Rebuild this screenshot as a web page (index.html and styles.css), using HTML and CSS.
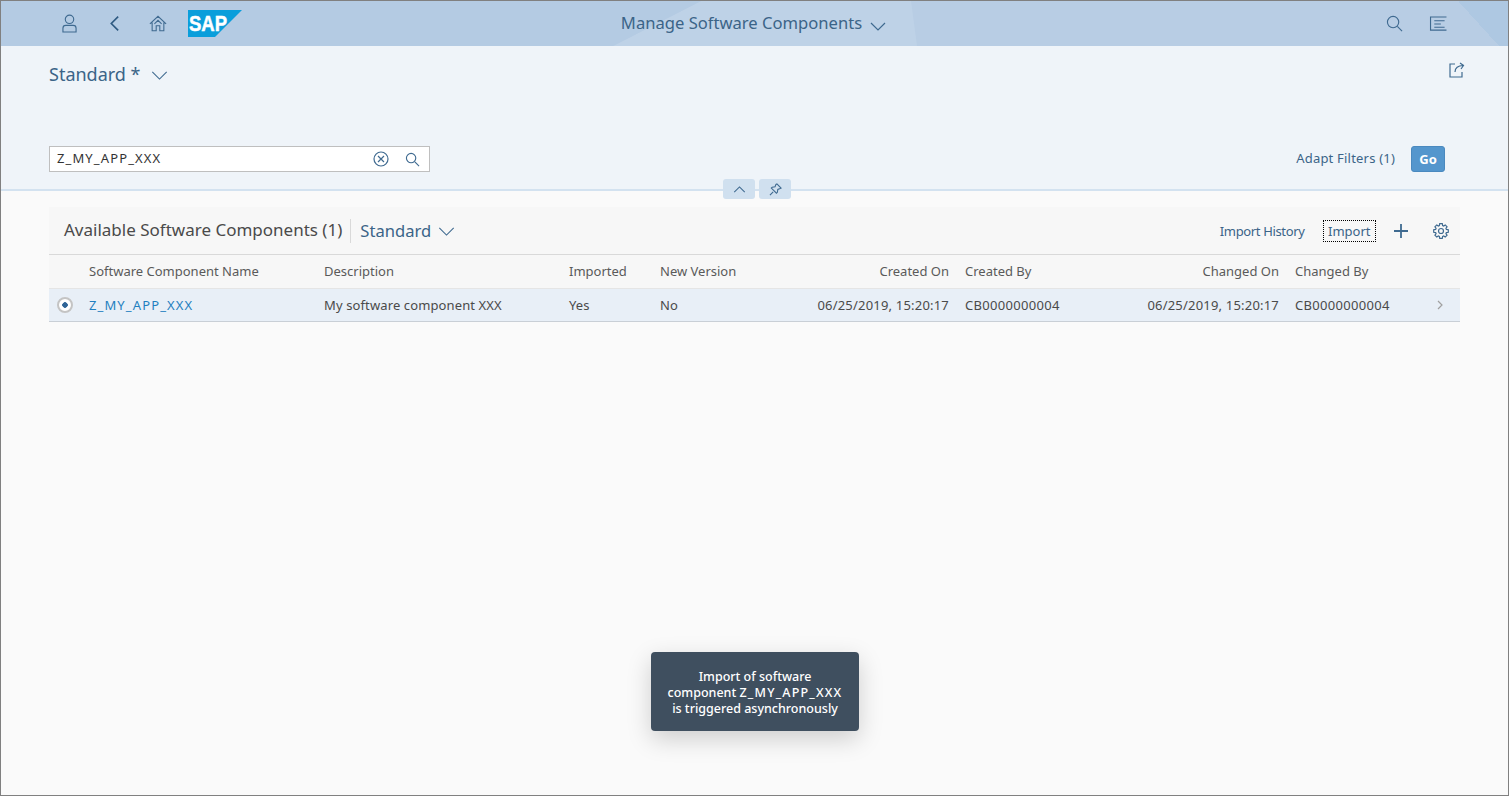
FILE: index.html
```html
<!doctype html>
<html>

<head>
  <title>Manage Software Components</title>
  <link rel="stylesheet" href="styles.css">
</head>

<body>
  <div class="page">
    <header class="shell">
      <div class="shell-left">
        <svg class="icon user" viewBox="0 0 16 20"><circle cx="8" cy="5.5" r="4.5" /><path d="M1 19v-4a3 3 0 0 1 3-3h8a3 3 0 0 1 3 3v4z" /></svg>
        <svg class="icon back" viewBox="0 0 12 18"><path d="M10 1.500 2.500 9l7.500 7.500" /></svg>
        <svg class="icon home" viewBox="0 0 20 18"><path d="M1 9.500 10 1l9 8.500M3.500 8v9h4.500v-5.500h4V17h4.500V8M6 9.500 10 5.500l4 4" /></svg>
        <svg class="sap-logo" viewBox="0 0 54 27">
          <polygon points="0,0 54,0 27,27 0,27" fill="#0a9edb" />
          <text x="1" y="21" class="sap-text" textLength="38" lengthAdjust="spacingAndGlyphs">SAP</text>
        </svg>
      </div>
      <div class="shell-title">
        <span>Manage Software Components</span>
        <svg class="icon chev-small" viewBox="0 0 16 9"><path d="M1 1l7 7 7-7" /></svg>
      </div>
      <div class="shell-right">
        <svg class="icon search" viewBox="0 0 18 18"><circle cx="7.500" cy="7.500" r="6" /><path d="M12 12l5 5" /></svg>
        <svg class="icon notes" viewBox="0 0 19 16"><path d="M18 1H1v14h17M5 5h11M5 8.500h7M5 12h11" /></svg>
      </div>
    </header>

    <section class="filterbar">
      <div class="variant-row">
        <div class="variant">
          <span>Standard *</span>
          <svg class="icon chev" viewBox="0 0 18 10"><path d="M1 1l8 8 8-8" /></svg>
        </div>
        <svg class="icon share" viewBox="0 0 16 16"><path d="M6 2H1v13h12v-5M6 10c0-4 3-6.500 8-6.500M11 1l3.500 2.500L12 7" /></svg>
      </div>
      <div class="filter-row">
        <div class="search-field">
          <span class="search-value caps">Z_MY_APP_XXX</span>
          <svg class="icon clear" viewBox="0 0 16 16"><circle cx="8" cy="8" r="7" /><path d="M5 5l6 6M11 5l-6 6" /></svg>
          <svg class="icon find" viewBox="0 0 16 16"><circle cx="6.500" cy="6.500" r="5" /><path d="M10.500 10.500 15 15" /></svg>
        </div>
        <div class="filter-actions">
          <a class="link adapt">Adapt Filters (1)</a>
          <button class="go" type="button">Go</button>
        </div>
      </div>
      <div class="collapse-btns">
        <button type="button"><svg class="icon up" viewBox="0 0 14 8"><path d="M1 7l6-6 6 6" /></svg></button>
        <button type="button"><svg class="icon pin" viewBox="0 0 14 14"><path d="M1 13l3.500-3.500M8.500 1l4.500 4.500-1 .5-2.500 1-.5 3-1 1L2.500 5.500l1-1 3-.5 1-2.500z" /></svg></button>
      </div>
    </section>

    <main class="content">
      <div class="table-wrap">
        <div class="toolbar">
          <span class="table-title">Available Software Components (1)</span>
          <span class="toolbar-sep"></span>
          <span class="table-variant">Standard</span>
          <svg class="icon chev" viewBox="0 0 18 10"><path d="M1 1l8 8 8-8" /></svg>
          <div class="toolbar-actions">
            <a class="link history">Import History</a>
            <a class="link focused">Import</a>
            <svg class="icon plus" viewBox="0 0 14 14"><path d="M7 0v14M0 7h14" /></svg>
            <svg class="icon gear" viewBox="0 0 16 16"><circle cx="8" cy="8" r="2.500" /><path d="M13.360 6.360 15.290 6.720V9.280L13.360 9.640 12.940 10.630 14.060 12.240 12.240 14.060 10.630 12.940 9.640 13.360 9.280 15.290H6.720L6.360 13.360 5.370 12.940 3.760 14.060 1.940 12.240 3.060 10.630 2.640 9.640 .71 9.280V6.720L2.640 6.360 3.060 5.370 1.940 3.760 3.760 1.940 5.370 3.060 6.360 2.640 6.720 .71H9.280L9.640 2.640 10.630 3.060 12.240 1.940 14.060 3.760 12.940 5.370z" /></svg>
          </div>
        </div>
        <div class="row head">
          <div></div>
          <div>Software Component Name</div>
          <div>Description</div>
          <div>Imported</div>
          <div>New Version</div>
          <div class="right">Created On</div>
          <div>Created By</div>
          <div class="right">Changed On</div>
          <div>Changed By</div>
          <div></div>
        </div>
        <div class="row item">
          <div class="radio-cell"><span class="radio"></span></div>
          <div><a class="name-link caps">Z_MY_APP_XXX</a></div>
          <div>My software component XXX</div>
          <div>Yes</div>
          <div>No</div>
          <div class="right date">06/25/2019, 15:20:17</div>
          <div class="num">CB0000000004</div>
          <div class="right date">06/25/2019, 15:20:17</div>
          <div class="num">CB0000000004</div>
          <div class="nav-cell"><svg class="icon nav" viewBox="0 0 6 10"><path d="M1 1l4 4-4 4" /></svg></div>
        </div>
      </div>
    </main>

    <div class="toast">Import of software<br>component <span class="toast-name">Z_MY_APP_XXX</span><br>is triggered asynchronously</div>
  </div>
</body>

</html>
```

FILE: styles.css
```css
*,
*::before,
*::after {
  box-sizing: border-box;
}

html,
body {
  margin: 0;
  height: 100%;
}

body {
  font-family: "Noto Sans", sans-serif;
  font-size: 13px;
  color: #333;
}

.page {
  position: relative;
  height: 796px;
  border: 1px solid #808080;
  background: #fafafa;
  display: flex;
  flex-direction: column;
  overflow: hidden;
}

.icon {
  fill: none;
  stroke: #3f6a90;
  stroke-width: 1.200;
  flex: none;
}

.caps {
  letter-spacing: 1.120px;
}

/* shell bar */
.shell {
  position: relative;
  height: 45px;
  flex: none;
  background: linear-gradient(47.700deg, #b8cde4 1108px, #aec8e2 1108px);
  display: grid;
  grid-template-columns: 1fr auto 1fr;
  align-items: center;
  padding: 0 60px 0 61px;
}

.shell::before {
  content: "";
  position: absolute;
  inset: 0;
  background: #bed2e7;
  clip-path: polygon(700px 0, 910px 0, 916px 100%, 612px 100%);
}

.shell::after {
  content: "";
  position: absolute;
  inset: 0;
  background: #b4cbe3;
  clip-path: polygon(0 0, 700px 0, 612px 100%, 0 100%);
}

.shell>div {
  position: relative;
  z-index: 1;
}

.shell-left {
  display: flex;
  align-items: center;
}

.user {
  width: 15px;
  height: 19px;
}

.back {
  width: 11px;
  height: 17px;
  margin-left: 32px;
  stroke-width: 1.800;
  stroke: #2f5b82;
}

.home {
  width: 18px;
  height: 17px;
  margin-left: 29px;
}

.sap-logo {
  width: 54px;
  height: 27px;
  margin-left: 21px;
}

.sap-text {
  font-family: "Liberation Sans", sans-serif;
  font-weight: 700;
  font-size: 22px;
  fill: #fff;
  stroke: #fff;
  stroke-width: 0.500;
}

.shell-title {
  display: flex;
  align-items: center;
  gap: 8px;
  font-size: 16.600px;
  color: #3b6488;
  margin: -3px 0 0 -3px;
}

.chev-small {
  width: 16px;
  height: 9px;
  margin-top: 8px;
}

.shell-right {
  display: flex;
  justify-content: flex-end;
  align-items: center;
  gap: 26px;
}

.search {
  width: 17px;
  height: 17px;
}

.notes {
  width: 19px;
  height: 15px;
}

/* filter bar */
.filterbar {
  position: relative;
  height: 145px;
  flex: none;
  background: #eff4f9;
  border-bottom: 2px solid #d3e2f0;
  padding: 0 48px;
}

.variant-row {
  display: flex;
  justify-content: space-between;
  align-items: flex-start;
  padding-top: 16px;
}

.variant {
  display: flex;
  align-items: center;
  gap: 10px;
  font-size: 18px;
  color: #3b6488;
}

.chev {
  width: 17px;
  height: 9px;
  margin-top: 2px;
}

.share {
  width: 16px;
  height: 16px;
  margin-right: -5px;
}

.filter-row {
  display: flex;
  justify-content: space-between;
  align-items: center;
  margin-top: 60px;
}

.search-field {
  width: 381px;
  height: 26px;
  background: #fff;
  border: 1px solid #bfbfbf;
  display: flex;
  align-items: center;
  padding: 0 9px 0 7px;
}

.search-value {
  flex: 1;
  margin-top: -2px;
}

.clear {
  width: 16px;
  height: 16px;
  margin-right: 16px;
}

.find {
  width: 15px;
  height: 15px;
}

.filter-actions {
  display: flex;
  align-items: center;
  gap: 16px;
  margin-right: 15px;
}

.link {
  color: #3b6488;
}

.adapt {
  letter-spacing: 0.200px;
  margin-top: -2px;
}

.history {
  letter-spacing: -0.350px;
}

.go {
  width: 34px;
  height: 26px;
  padding: 0;
  border: 1px solid #4a89bf;
  border-radius: 3px;
  background: #5496cd;
  color: #fff;
  font: 700 13px "Noto Sans", sans-serif;
}

.collapse-btns {
  position: absolute;
  left: 722px;
  bottom: -10px;
  display: flex;
  gap: 4px;
}

.collapse-btns button {
  width: 32px;
  height: 20px;
  padding: 0;
  border: 0;
  border-radius: 3px;
  background: #d0e0ef;
  display: flex;
  align-items: center;
  justify-content: center;
}

.up {
  width: 13px;
  height: 7px;
}

.pin {
  width: 13px;
  height: 13px;
}

/* table */
.content {
  flex: 1;
  padding: 16px 48px 0;
}

.table-wrap {
  background: #f7f7f7;
}

.toolbar {
  height: 47px;
  display: flex;
  align-items: center;
  padding: 0 11px 0 15px;
}

.table-title {
  font-size: 17px;
  color: #4a4a4a;
  margin-top: -2px;
}

.toolbar-sep {
  width: 1px;
  height: 24px;
  background: #d9d9d9;
  margin: 0 9px 0 8px;
}

.table-variant {
  font-size: 16.600px;
  color: #3b6488;
  margin-right: 7px;
}

.toolbar-actions {
  margin-left: auto;
  display: flex;
  align-items: center;
}

.focused {
  margin-left: 18px;
  padding: 1px 4.500px;
  border: 1px dotted #000;
}

.plus {
  width: 14px;
  height: 14px;
  margin-left: 18px;
  stroke-width: 1.800;
}

.gear {
  width: 16px;
  height: 16px;
  margin-left: 25px;
}

.row {
  display: grid;
  grid-template-columns: 40px 235px 245px 91px 130px 175px 135px 195px 130px 35px;
  align-items: center;
}

.row .right {
  text-align: right;
  padding-right: 16px;
}

.head {
  height: 34px;
  border-top: 1px solid #d9d9d9;
  color: #5a5a5a;
  padding-bottom: 2px;
}

.item {
  height: 34px;
  background: #e8eff7;
  border-top: 1px solid #e5e5e5;
  border-bottom: 1px solid #c9cfd6;
  color: #4a4a4a;
  letter-spacing: 0.120px;
}

.item .num {
  letter-spacing: 0.300px;
}

.item .date {
  letter-spacing: 0.200px;
}

.item .caps {
  letter-spacing: 1.120px;
}

.radio-cell {
  display: flex;
  padding-left: 8px;
}

.radio {
  width: 16px;
  height: 16px;
  border-radius: 50%;
  border: 2px solid #c4c4c4;
  background: radial-gradient(circle, #2f6497 0 2.500px, #fff 3px);
}

.name-link {
  color: #1f7fc0;
}

.nav-cell {
  display: flex;
  padding-left: 12px;
}

.nav {
  width: 6px;
  height: 10px;
  stroke: #a0a0a0;
}

/* message toast */
.toast {
  position: absolute;
  left: 650px;
  top: 651px;
  width: 208px;
  height: 79px;
  padding: 17px 0;
  border-radius: 4px;
  background: #3f4f5f;
  color: #fff;
  text-align: center;
  font-size: 12.500px;
  font-weight: 500;
  line-height: 16px;
  box-shadow: 0 8px 24px rgba(0, 0, 0, 0.18);
}

.toast-name {
  letter-spacing: 1.200px;
}
```
